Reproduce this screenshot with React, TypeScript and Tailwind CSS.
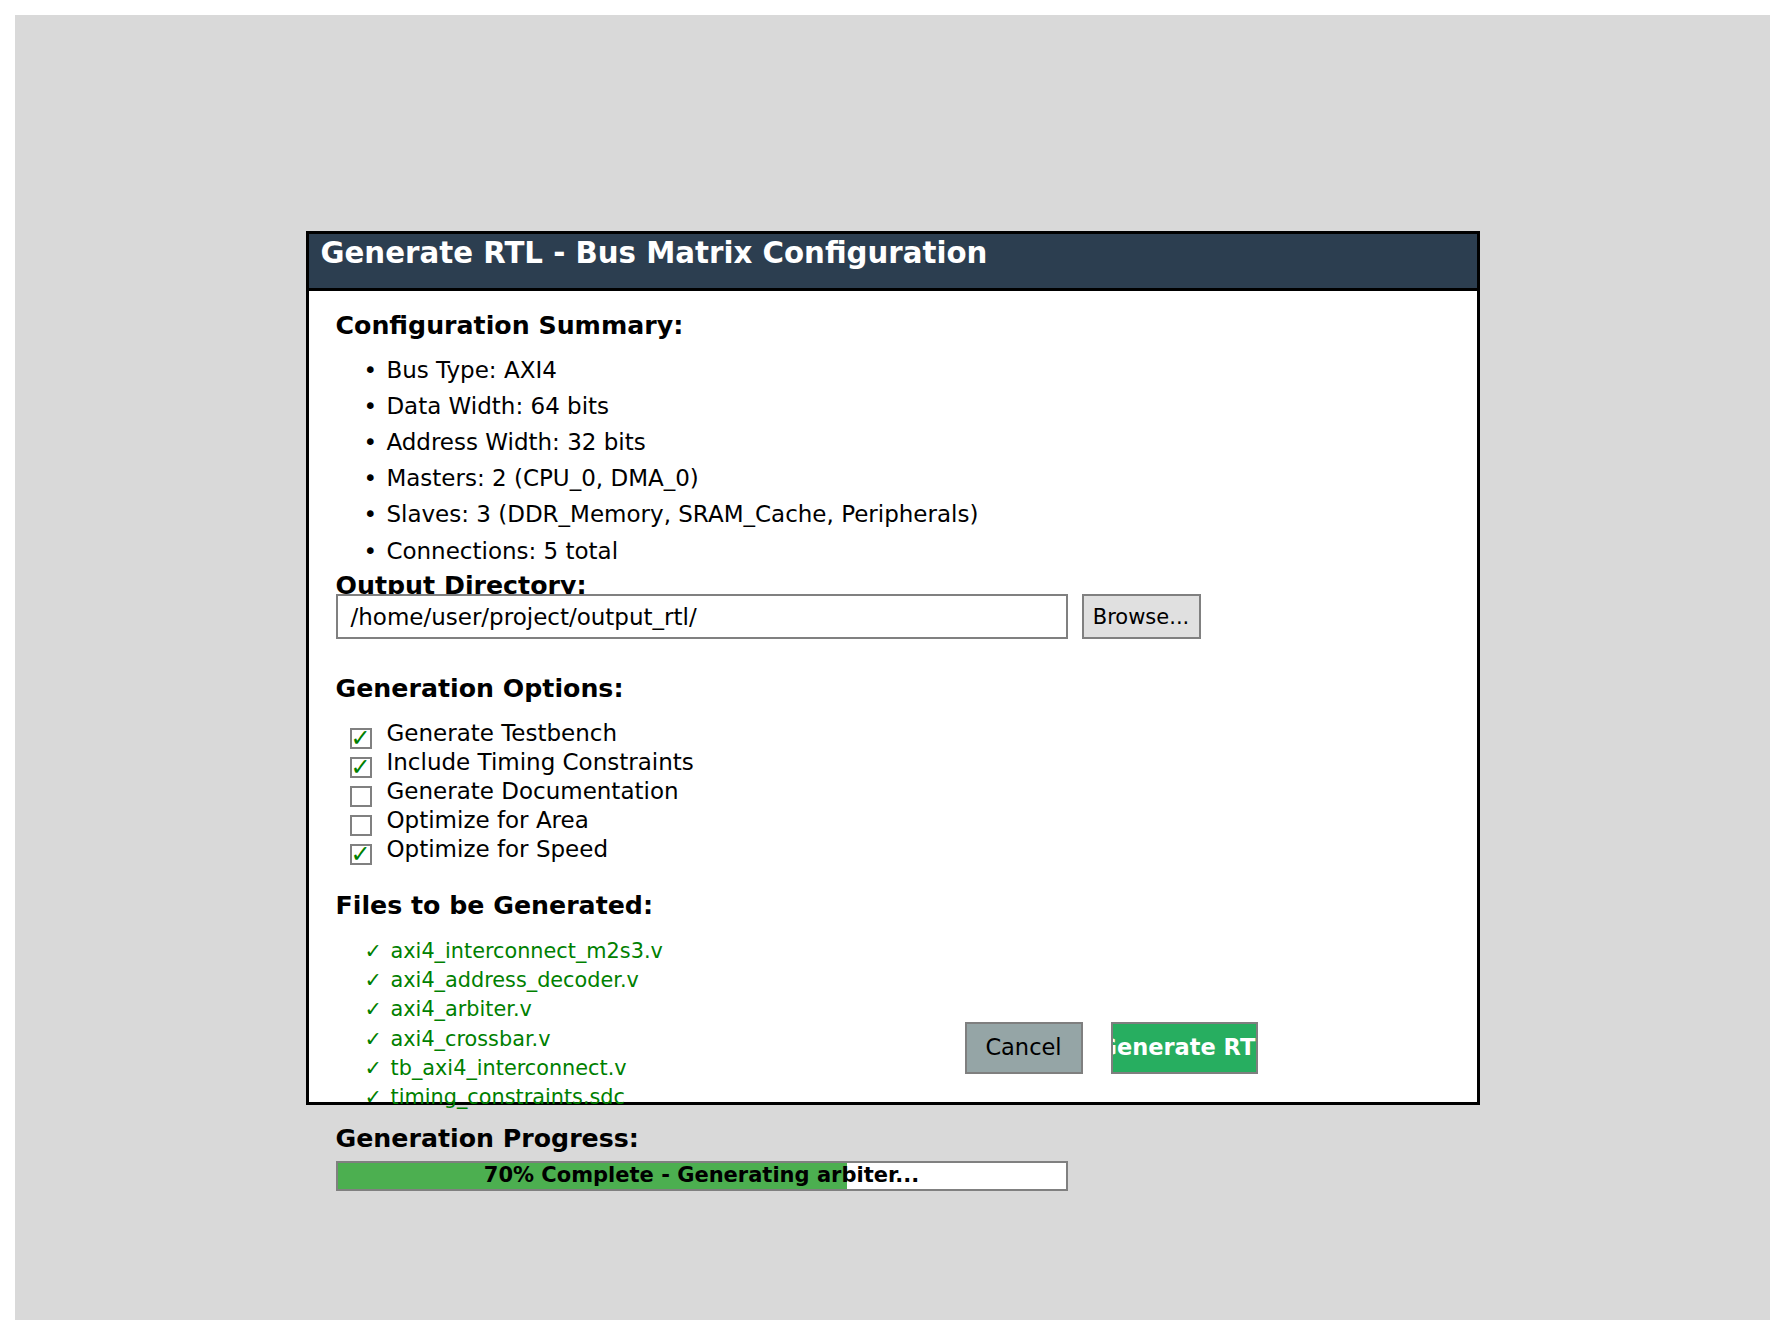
import React from "react";

const summary = [
  "Bus Type: AXI4",
  "Data Width: 64 bits",
  "Address Width: 32 bits",
  "Masters: 2 (CPU_0, DMA_0)",
  "Slaves: 3 (DDR_Memory, SRAM_Cache, Peripherals)",
  "Connections: 5 total",
];

const options = [
  { label: "Generate Testbench", checked: true },
  { label: "Include Timing Constraints", checked: true },
  { label: "Generate Documentation", checked: false },
  { label: "Optimize for Area", checked: false },
  { label: "Optimize for Speed", checked: true },
];

const files = [
  "axi4_interconnect_m2s3.v",
  "axi4_address_decoder.v",
  "axi4_arbiter.v",
  "axi4_crossbar.v",
  "tb_axi4_interconnect.v",
  "timing_constraints.sdc",
];

const progress = 70;

function Checkbox({ checked }: { checked: boolean }) {
  return (
    <div className="ml-[14px] mt-[9px] flex h-[21px] w-[22px] shrink-0 items-end justify-center border-2 border-[#808080] bg-white">
      {checked && <span className="text-[24px] leading-[17px] text-[#008000]">✓</span>}
    </div>
  );
}

export default function App() {
  return (
    <div className="h-screen w-full bg-white p-[15px] font-['DejaVu_Sans',sans-serif] text-black">
      <div className="flex h-full items-center justify-center bg-[#d9d9d9]">
        {/* dialog */}
        <div className="relative flex h-[874px] w-[1174px] shrink-0 flex-col border-[3px] border-black bg-white">
          <div className="h-[57px] shrink-0 border-b-[3px] border-black bg-[#2c3e50] pl-[12px] pt-[2px]">
            <h1 className="text-[29.25px] font-bold leading-[34px] text-white">Generate RTL - Bus Matrix Configuration</h1>
          </div>

          <div className="flex shrink-0 flex-col px-[27px] pt-[20px]">
            <h2 className="text-[25.25px] font-bold leading-[29px]">Configuration Summary:</h2>
            <ul className="ml-[28px] mt-[12px]">
              {summary.map((s) => (
                <li key={s} className="text-[23px] leading-[36.2px]">
                  <span className="mr-[2px]">•</span> {s}
                </li>
              ))}
            </ul>

            <h2 className="mt-[2px] text-[25.25px] font-bold leading-[29px]">Output Directory:</h2>
            <div className="-mt-[6px] flex">
              <div className="h-[45px] w-[732px] border-2 border-[#808080] bg-white pl-[13px] pt-[4px] text-[23px] leading-normal">
                /home/user/project/output_rtl/
              </div>
              <button className="ml-[14px] flex h-[45px] w-[119px] items-center justify-center border-2 border-[#808080] bg-[#e0e0e0] pt-[4px] text-[21px]">
                Browse...
              </button>
            </div>

            <h2 className="mt-[35px] text-[25.25px] font-bold leading-[29px]">Generation Options:</h2>
            <div className="mt-[16.5px] flex flex-col">
              {options.map((o) => (
                <div key={o.label} className="flex h-[29px] items-start">
                  <Checkbox checked={o.checked} />
                  <span className="ml-[15px] text-[23px] leading-[29px]">{o.label}</span>
                </div>
              ))}
            </div>

            <h2 className="mt-[27px] text-[25.25px] font-bold leading-[29px]">Files to be Generated:</h2>
            <ul className="ml-[29px] mt-[16.5px]">
              {files.map((f) => (
                <li key={f} className="text-[20.8px] leading-[29.3px] text-[#008000]">
                  <span className="mr-[2px]">✓</span> {f}
                </li>
              ))}
            </ul>

            <h2 className="mt-[11.5px] text-[25.25px] font-bold leading-[29px]">Generation Progress:</h2>
            <div className="relative mt-[8px] h-[30px] w-[732px] border-2 border-[#808080] bg-white">
              <div className="absolute inset-y-0 left-0 bg-[#4caf50]" style={{ width: `${progress}%` }} />
              <div className="absolute inset-0 flex items-center justify-center text-[21px] font-bold">
                {progress}% Complete - Generating arbiter...
              </div>
            </div>
          </div>

          {/* footer buttons */}
          <div className="absolute bottom-[28px] left-[656px] flex gap-[28px]">
            <button className="flex h-[52px] w-[118px] items-center justify-center border-2 border-[#7f7f7f] bg-[#95a5a6] text-[22.5px]">
              Cancel
            </button>
            <button className="flex h-[52px] w-[147px] items-center justify-center overflow-hidden whitespace-nowrap border-2 border-[#7f7f7f] bg-[#27ae60] text-[22.5px] font-bold text-white">
              Generate RTL
            </button>
          </div>
        </div>
      </div>
    </div>
  );
}
